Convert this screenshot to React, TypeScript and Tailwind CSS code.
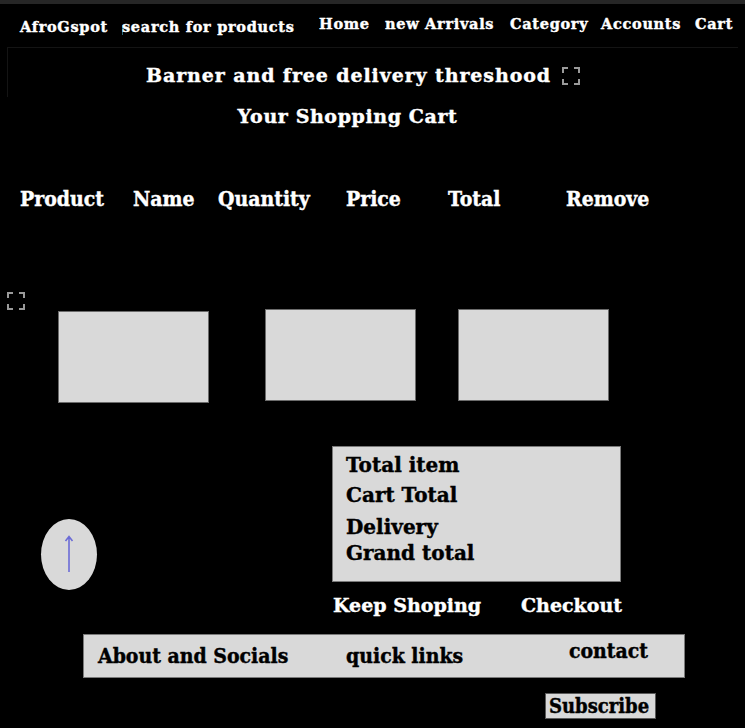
import React from 'react';

const slab = "font-['DejaVu_Serif',serif] font-bold";
const cond = "font-['DejaVu_Serif_Condensed','DejaVu_Serif',serif] font-bold";

function BrokenImage({ className }: { className?: string }) {
  return (
    <svg className={className} width="18" height="18" viewBox="0 0 18 18" fill="none">
      <path d="M1 6V1h5M12 1h5v5M17 12v5h-5M6 17H1v-5" stroke="#9a9a9a" strokeWidth="2" />
    </svg>
  );
}

export default function App() {
  return (
    <div className="w-[745px] h-[728px] bg-black text-white overflow-hidden [-webkit-text-stroke:0.4px]">
      <div className="h-[4px] bg-[#262626]" />

      {/* Nav */}
      <div className={`flex items-start h-[40px] pt-[9px] ${slab} text-[14.5px] tracking-[0.7px]`}>
        <span className="ml-[20px] mt-[3px] w-[102px]">AfroGspot</span>
        <div className="mt-[3px] w-[197px] flex items-center">
          <span className="w-px h-[10px] bg-[#2c6a7a] mr-[-1px] mt-[6px]" />
          <span>search for products</span>
        </div>
        <span className="w-[66px]">Home</span>
        <span className="w-[125px]">new Arrivals</span>
        <span className="w-[91px]">Category</span>
        <span className="w-[94px]">Accounts</span>
        <span>Cart</span>
      </div>

      {/* Banner */}
      <div className="mx-[7px] mt-[3px] h-[50px] border-l border-t border-[#141414] flex items-center justify-center pt-[6px] pr-[20px]">
        <span className={`${slab} text-[19px] tracking-[0.9px]`}>Barner and free delivery threshood</span>
        <BrokenImage className="ml-[11px]" />
      </div>

      <h1 className={`${slab} text-[19px] tracking-[0.6px] text-center mt-[5px] pr-[50px]`}>Your Shopping Cart</h1>

      {/* Table header */}
      <div className={`flex mt-[52px] ${cond} text-[21px] h-[24px]`}>
        <span className="ml-[20px] w-[113px]">Product</span>
        <span className="w-[85px]">Name</span>
        <span className="w-[128px]">Quantity</span>
        <span className="w-[102px]">Price</span>
        <span className="w-[118px]">Total</span>
        <span>Remove</span>
      </div>

      <div className="mt-[85px] ml-[7px]">
        <BrokenImage />
      </div>

      <div className="flex items-start">
        <div className="ml-[58px] mt-[1px] w-[151px] h-[92px] bg-[#d9d9d9] border border-[#6b6b6b]" />
        <div className="ml-[56px] mt-[-1px] w-[151px] h-[92px] bg-[#d9d9d9] border border-[#6b6b6b]" />
        <div className="ml-[42px] mt-[-1px] w-[151px] h-[92px] bg-[#d9d9d9] border border-[#6b6b6b]" />
      </div>

      {/* Summary + scroll button */}
      <div className="flex items-start mt-[43px]">
        <div className="ml-[41px] mt-[73px] w-[56px] h-[71px] rounded-[50%] bg-[#d9d9d9] flex items-center justify-center">
          <svg width="10" height="40" viewBox="0 0 10 40" fill="none">
            <path d="M5 38V3M1.5 7L5 2.5 8.5 7" stroke="#6b6bd6" strokeWidth="1.6" />
          </svg>
        </div>
        <div className={`ml-[235px] w-[289px] h-[136px] bg-[#d9d9d9] border border-[#7a7a7a] text-black ${slab} text-[20px] pl-[13px] pt-[7px] leading-[22px]`}>
          <div>Total item</div>
          <div className="mt-[8px]">Cart Total</div>
          <div className="mt-[10px]">Delivery</div>
          <div className="mt-[4px]">Grand total</div>
        </div>
      </div>

      <div className={`flex mt-[1px] ${slab} text-[19px] h-[24px]`}>
        <span className="ml-[333px] w-[188px]">Keep Shoping</span>
        <span>Checkout</span>
      </div>

      {/* Footer */}
      <div className={`ml-[83px] mt-[19px] w-[602px] h-[44px] bg-[#d9d9d9] border border-[#7a7a7a] text-black ${cond} text-[21px] leading-[24px] flex items-start`}>
        <span className="ml-[14px] mt-[9px] w-[248px]">About and Socials</span>
        <span className="mt-[9px] w-[223px]">quick links</span>
        <span className="mt-[4px]">contact</span>
      </div>

      <div className="ml-[545px] mt-[15px] w-[111px] h-[26px] bg-[#d9d9d9] border border-[#5a5a5a] text-black overflow-hidden flex items-center">
        <span className={`${cond} text-[20px] leading-[24px] pl-[3px] whitespace-nowrap`}>Subscribe</span>
      </div>
    </div>
  );
}
